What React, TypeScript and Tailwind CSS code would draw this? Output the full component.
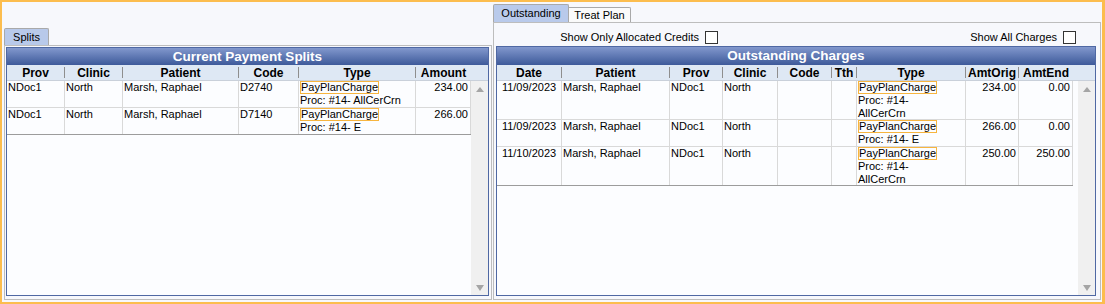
import React from 'react';

type Align = 'left' | 'center' | 'right';
type Col = { label: string; w: string; align?: Align };
type Cell = string | { box: string; lines: string[] };
type Row = { h: string; cells: Cell[] };

const leftCols: Col[] = [
  { label: 'Prov', w: 'w-[58px]' },
  { label: 'Clinic', w: 'w-[58px]' },
  { label: 'Patient', w: 'w-[116px]' },
  { label: 'Code', w: 'w-[60px]' },
  { label: 'Type', w: 'w-[117px]' },
  { label: 'Amount', w: 'w-[55px]', align: 'right' },
];

const rightCols: Col[] = [
  { label: 'Date', w: 'w-[65px]', align: 'center' },
  { label: 'Patient', w: 'w-[108px]' },
  { label: 'Prov', w: 'w-[53px]' },
  { label: 'Clinic', w: 'w-[55px]' },
  { label: 'Code', w: 'w-[54px]' },
  { label: 'Tth', w: 'w-[25px]' },
  { label: 'Type', w: 'w-[109px]' },
  { label: 'AmtOrig', w: 'w-[53px]', align: 'right' },
  { label: 'AmtEnd', w: 'w-[54px]', align: 'right' },
];

const leftRows: Row[] = [
  {
    h: 'h-[27px]',
    cells: ['NDoc1', 'North', 'Marsh, Raphael', 'D2740', { box: 'PayPlanCharge', lines: ['Proc: #14- AllCerCrn'] }, '234.00'],
  },
  {
    h: 'h-[27px]',
    cells: ['NDoc1', 'North', 'Marsh, Raphael', 'D7140', { box: 'PayPlanCharge', lines: ['Proc: #14- E'] }, '266.00'],
  },
];

const rightRows: Row[] = [
  {
    h: 'h-[39px]',
    cells: ['11/09/2023', 'Marsh, Raphael', 'NDoc1', 'North', '', '', { box: 'PayPlanCharge', lines: ['Proc: #14-', 'AllCerCrn'] }, '234.00', '0.00'],
  },
  {
    h: 'h-[27px]',
    cells: ['11/09/2023', 'Marsh, Raphael', 'NDoc1', 'North', '', '', { box: 'PayPlanCharge', lines: ['Proc: #14- E'] }, '266.00', '0.00'],
  },
  {
    h: 'h-[39px]',
    cells: ['11/10/2023', 'Marsh, Raphael', 'NDoc1', 'North', '', '', { box: 'PayPlanCharge', lines: ['Proc: #14-', 'AllCerCrn'] }, '250.00', '250.00'],
  },
];

function alignClass(a?: Align) {
  if (a === 'right') return 'text-right pr-[2px]';
  if (a === 'center') return 'text-center';
  return 'pl-[1px]';
}

function CellContent({ cell, align }: { cell: Cell; align?: Align }) {
  if (typeof cell === 'string') {
    return <div className={`${alignClass(align)} leading-[13px] whitespace-nowrap`}>{cell}</div>;
  }
  return (
    <div className={`${alignClass(align)} leading-[13px] whitespace-nowrap`}>
      <div className="w-fit border border-[#f7b53f] leading-[11px]">{cell.box}</div>
      {cell.lines.map((l) => (
        <div key={l} className="leading-[13px]">
          {l}
        </div>
      ))}
    </div>
  );
}

function Scrollbar() {
  return (
    <div className="w-[17px] bg-[#f0f0f0] flex flex-col items-center justify-between pt-[6px] pb-[4px]">
      <div className="w-0 h-0 border-x-[4px] border-x-transparent border-b-[5px] border-b-[#a5a5a5]" />
      <div className="w-0 h-0 border-x-[4px] border-x-transparent border-t-[6px] border-t-[#a5a5a5]" />
    </div>
  );
}

function Grid({
  title,
  cols,
  rows,
  rowsW,
  titleH,
}: {
  title: string;
  cols: Col[];
  rows: Row[];
  rowsW: string;
  titleH: string;
}) {
  return (
    <div className="flex-1 flex flex-col border border-[#4f68a3] bg-[#fcfdff]">
      <div
        className={`${titleH} flex items-center justify-center bg-gradient-to-b from-[#8298cd] to-[#3e5a9a] text-white font-bold text-[13.5px] leading-none`}
      >
        {title}
      </div>
      <div className="h-[16px] flex bg-[#dee8f4] border-b border-[#c9d0da] text-[12px] font-bold text-black">
        {cols.map((c, i) => (
          <div key={c.label} className={`${c.w} flex items-center`}>
            <span className="flex-1 text-center leading-none">{c.label}</span>
            {i < cols.length - 1 && <span className="w-px h-[11px] bg-[#8e8e8e]" />}
          </div>
        ))}
      </div>
      <div className="flex-1 flex">
        <div className={`${rowsW} flex flex-col`}>
          {rows.map((r, ri) => (
            <div
              key={ri}
              className={`${r.h} flex border-b ${ri === rows.length - 1 ? 'border-[#9c9c9c]' : 'border-[#d9d9d9]'}`}
            >
              {r.cells.map((cell, ci) => (
                <div key={ci} className={`${cols[ci].w} border-r border-[#d9d9d9] overflow-visible`}>
                  <CellContent cell={cell} align={cols[ci].align} />
                </div>
              ))}
            </div>
          ))}
        </div>
        <div className="flex-1" />
        <Scrollbar />
      </div>
    </div>
  );
}

function CheckBox() {
  return <div className="w-[13px] h-[13px] border border-[#333333] bg-white" />;
}

export default function App() {
  return (
    <div className="w-[1105px] h-[304px] border-y-2 border-l-2 border-r-[3px] border-[#fcbd4e] bg-[#f7f8fc] flex pl-[2px] pr-[1px] pb-[2px] gap-[1px] font-['Liberation_Sans',Arial,sans-serif] text-[11px] text-black">
      {/* Left: Splits */}
      <div className="w-[488px] flex flex-col pt-[26px]">
        <div className="h-[17px] flex items-end">
          <div className="w-[45px] h-[17px] bg-[#b8c9ea] border border-b-0 border-[#a9a9a9] rounded-t-[2px] flex items-center justify-center text-[11px]">
            Splits
          </div>
        </div>
        <div className="h-[255px] border border-[#bdbdbd] pt-[1px] pl-[1px] pr-[2px] pb-[3px] flex">
          <Grid title="Current Payment Splits" cols={leftCols} rows={leftRows} rowsW="w-[464px]" titleH="h-[17px]" />
        </div>
      </div>

      {/* Right: Outstanding */}
      <div className="w-[608px] flex flex-col pt-[2px]">
        <div className="h-[18px] flex items-end">
          <div className="w-[76px] h-[18px] bg-[#b9caeb] border border-b-0 border-[#a9a9a9] rounded-t-[2px] flex items-center justify-center">
            Outstanding
          </div>
          <div className="w-[62px] h-[15px] bg-[#fafafa] border border-l-0 border-b-0 border-[#a9a9a9] rounded-tr-[2px] flex items-center justify-center">
            Treat Plan
          </div>
        </div>
        <div className="h-[278px] border border-[#bdbdbd] pl-[2px] pr-[4px] pb-[3px] flex flex-col">
          <div className="h-[23px] flex items-end pb-[2px]">
            <div className="w-[222px] flex items-center justify-end gap-[6px]">
              <span className="leading-none">Show Only Allocated Credits</span>
              <CheckBox />
            </div>
            <div className="flex-1 flex items-center justify-end gap-[6px] pr-[20px]">
              <span className="leading-none">Show All Charges</span>
              <CheckBox />
            </div>
          </div>
          <div className="flex-1 flex">
            <Grid title="Outstanding Charges" cols={rightCols} rows={rightRows} rowsW="w-[576px]" titleH="h-[18px]" />
          </div>
        </div>
      </div>
    </div>
  );
}
